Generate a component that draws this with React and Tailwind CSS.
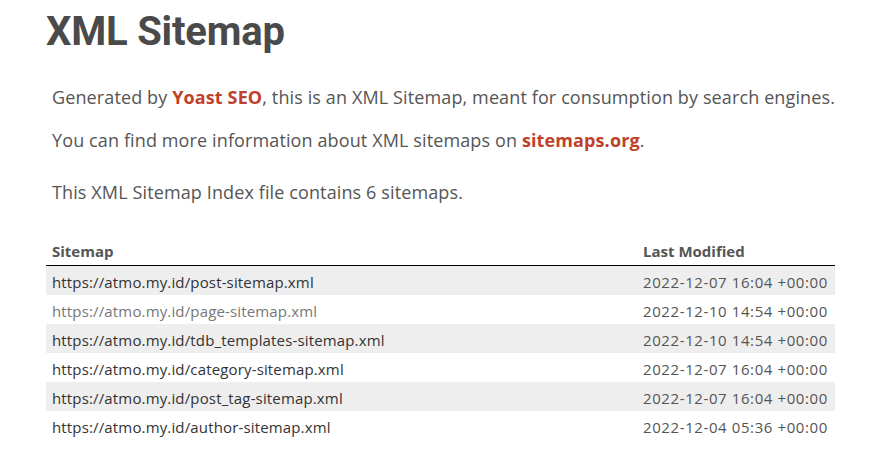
const sitemaps = [
  { url: 'https://atmo.my.id/post-sitemap.xml', date: '2022-12-07 16:04 +00:00' },
  { url: 'https://atmo.my.id/page-sitemap.xml', date: '2022-12-10 14:54 +00:00', visited: true },
  { url: 'https://atmo.my.id/tdb_templates-sitemap.xml', date: '2022-12-10 14:54 +00:00' },
  { url: 'https://atmo.my.id/category-sitemap.xml', date: '2022-12-07 16:04 +00:00' },
  { url: 'https://atmo.my.id/post_tag-sitemap.xml', date: '2022-12-07 16:04 +00:00' },
  { url: 'https://atmo.my.id/author-sitemap.xml', date: '2022-12-04 05:36 +00:00' },
]

export default function App() {
  return (
    <main
      className="min-h-screen bg-white text-[#555] pl-[46px] pt-[8px]"
      style={{ fontFamily: '"Open Sans", "Noto Sans", sans-serif' }}
    >
      <h1
        className="text-[40px] leading-[48px] font-bold text-[#4a4a4a] tracking-[-0.2px]"
        style={{ fontFamily: 'Roboto, sans-serif' }}
      >
        XML Sitemap
      </h1>

      <div className="pl-[6px] mt-[27px] text-[18px] leading-[28px] tracking-[0.12px]">
        <p>
          Generated by{' '}
          <a href="#" className="font-bold text-[#c0412a]">Yoast SEO</a>, this is an XML Sitemap, meant
          for consumption by search engines.
        </p>
        <p className="mt-[15px]">
          You can find more information about XML sitemaps on{' '}
          <a href="#" className="font-bold text-[#c0412a]">sitemaps.org</a>.
        </p>
      </div>

      <div className="pl-[6px] mt-[24px] text-[18px] leading-[28px] tracking-[0.12px]">
        <p>This XML Sitemap Index file contains 6 sitemaps.</p>
      </div>

      <table className="mt-[34px] w-[789px] table-fixed border-collapse text-[15px]">
        <thead>
          <tr className="border-b border-black">
            <th className="text-left font-bold text-[#555] pl-[6px] leading-[20px] pt-[1px] pb-[4px]">Sitemap</th>
            <th className="text-left font-bold text-[#555] pl-[6px] w-[198px] leading-[20px] pt-[1px] pb-[4px]">
              Last Modified
            </th>
          </tr>
        </thead>
        <tbody>
          {sitemaps.map((s, i) => (
            <tr key={s.url} className={i % 2 === 0 ? 'bg-[#eeeeee]' : 'bg-white'}>
              <td className="pl-[6px] h-[29px] leading-[20px] pt-[3px] tracking-[0.15px]">
                <a href="#" className={s.visited ? 'text-[#777]' : 'text-[#333]'}>
                  {s.url}
                </a>
              </td>
              <td className="pl-[6px] h-[29px] leading-[20px] pt-[3px] text-[#555] tracking-[0.6px] whitespace-nowrap">
                {s.date}
              </td>
            </tr>
          ))}
        </tbody>
      </table>
    </main>
  )
}
